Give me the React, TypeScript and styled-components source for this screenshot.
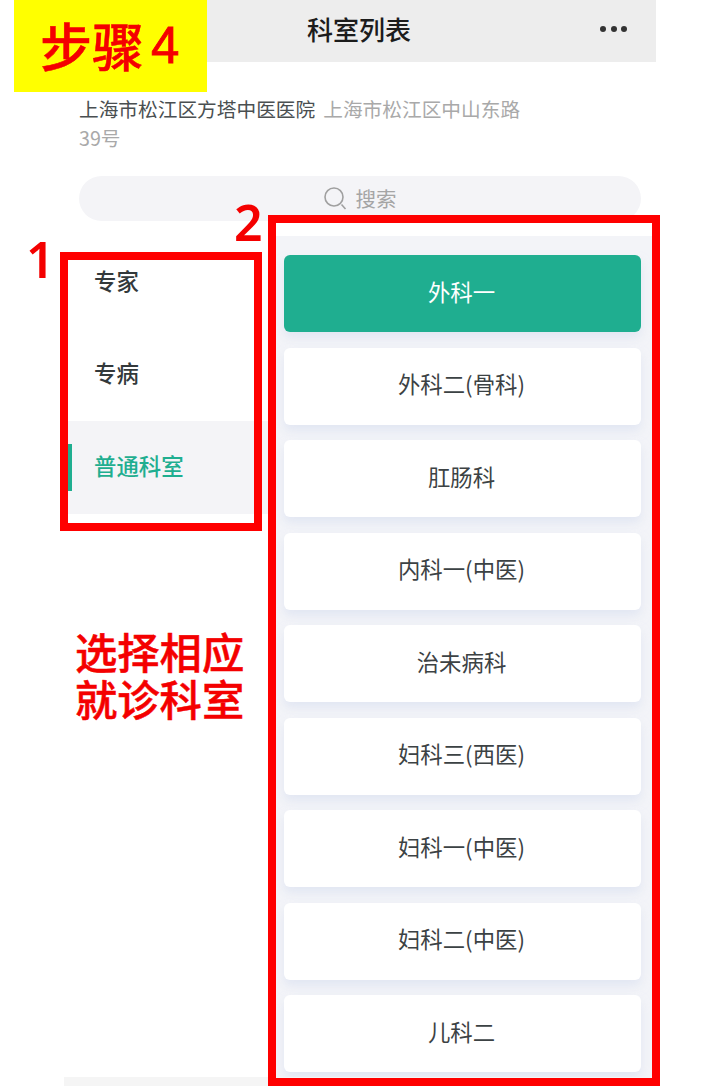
import React from "react";
import styled, { createGlobalStyle } from "styled-components";

const Global = createGlobalStyle`
  html, body { margin: 0; padding: 0; background: #fff; }
  body { font-family: "Noto Sans CJK SC", "Noto Sans", sans-serif; }
`;

const Page = styled.div`
  position: relative;
  width: 720px;
  height: 1086px;
  overflow: hidden;
  background: #fff;
`;
const Phone = styled.div`
  margin-left: 64px;
  width: 592px;
  display: flex;
  flex-direction: column;
`;
const Header = styled.header`
  height: 62px;
  background: #ededed;
  display: grid;
  grid-template-columns: 1fr auto 1fr;
  align-items: center;
`;
const Title = styled.h1`
  grid-column: 2;
  margin: 0;
  padding-right: 2px;
  padding-bottom: 5px;
  font-size: 26px;
  font-weight: 500;
  color: #1c1c1c;
  line-height: 1;
`;
const More = styled.div`
  justify-self: end;
  margin-right: 29px;
  padding-bottom: 5px;
  display: flex;
  gap: 4.5px;
`;
const Dot = styled.span`
  width: 6px;
  height: 6px;
  border-radius: 50%;
  background: #333;
`;
const Info = styled.div`
  padding: 32px 128px 2px 15px;
  font-size: 19.7px;
  line-height: 29px;
`;
const Hospital = styled.span`
  color: #4a4f51;
  margin-right: 8px;
`;
const Address = styled.span`
  color: #a9a9a9;
`;
const Search = styled.div`
  margin: 22px 15px 15px;
  height: 45px;
  border-radius: 23px;
  background: #f4f4f7;
  display: flex;
  align-items: center;
  justify-content: center;
  gap: 8px;
  font-size: 20.5px;
  color: #a5a5a5;
`;
const SearchText = styled.span`
  padding-bottom: 2px;
`;
const Body = styled.div`
  display: flex;
  height: 841px;
`;
const Side = styled.nav`
  width: 206px;
  flex: none;
`;
const SideItem = styled.div<{ $active?: boolean }>`
  position: relative;
  box-sizing: border-box;
  height: 92.5px;
  padding: 0 0 5px 30px;
  display: flex;
  align-items: center;
  font-size: 22.4px;
  font-weight: 500;
  color: ${(p) => (p.$active ? "#1fae90" : "#33393b")};
  background: ${(p) => (p.$active ? "#f4f4f7" : "transparent")};
  &::before {
    content: "";
    display: ${(p) => (p.$active ? "block" : "none")};
    position: absolute;
    left: 0;
    top: 23px;
    width: 8px;
    height: 47px;
    background: #1fae90;
  }
`;
const Panel = styled.section`
  flex: 1;
  background: #f3f4f8;
  padding: 19px 15px 0 14px;
  display: flex;
  flex-direction: column;
  gap: 15.5px;
  overflow: hidden;
`;
const Card = styled.div<{ $active?: boolean }>`
  flex: none;
  box-sizing: border-box;
  height: 77px;
  padding: 0 2px 6px 0;
  border-radius: 6px;
  display: flex;
  align-items: center;
  justify-content: center;
  font-size: 22.4px;
  color: ${(p) => (p.$active ? "#ffffff" : "#3c4244")};
  background: ${(p) => (p.$active ? "#1fae90" : "#ffffff")};
  box-shadow: 0 6px 10px rgba(214, 220, 238, 0.55);
`;
const Footer = styled.div`
  height: 9px;
  background: #f5f5f5;
`;
const StepBadge = styled.div`
  position: absolute;
  left: 14px;
  top: 0;
  width: 193px;
  height: 92px;
  box-sizing: border-box;
  padding: 0 0 2px 26px;
  background: #ffff00;
  color: #f40000;
  display: flex;
  align-items: center;
  gap: 7px;
  font-size: 52px;
  font-weight: 500;
  line-height: 1;
  -webkit-text-stroke: 0.5px #f40000;
`;
const StepDigit = styled.span`
  font-family: "Liberation Sans", sans-serif;
  font-weight: 400;
  font-size: 51px;
  -webkit-text-stroke: 0.8px #f40000;
`;
const Frame = styled.div<{ $x: number; $y: number; $w: number; $h: number }>`
  position: absolute;
  left: ${(p) => p.$x}px;
  top: ${(p) => p.$y}px;
  width: ${(p) => p.$w}px;
  height: ${(p) => p.$h}px;
  box-sizing: border-box;
  border: 8px solid #ff0000;
`;
const Num = styled.div<{ $x: number; $y: number }>`
  position: absolute;
  left: ${(p) => p.$x}px;
  top: ${(p) => p.$y}px;
  font-family: "Noto Sans", sans-serif;
  font-weight: 600;
  font-size: 50px;
  line-height: 1;
  color: #f40000;
`;
const Note = styled.div`
  position: absolute;
  left: 75px;
  top: 627px;
  font-size: 42.3px;
  font-weight: 500;
  line-height: 47px;
  color: #f40000;
  -webkit-text-stroke: 0.5px #f40000;
`;

const departments = [
  "外科一",
  "外科二(骨科)",
  "肛肠科",
  "内科一(中医)",
  "治未病科",
  "妇科三(西医)",
  "妇科一(中医)",
  "妇科二(中医)",
  "儿科二",
];

const SearchIcon = () => (
  <svg width="24" height="25" viewBox="0 0 24 25" fill="none" stroke="#a0a0a0" strokeWidth="1.6">
    <circle cx="10" cy="11" r="9" />
    <path d="M17.5 18.5l4 4.5" />
  </svg>
);

export default function App() {
  return (
    <Page>
      <Global />
      <Phone>
        <Header>
          <Title>科室列表</Title>
          <More>
            <Dot />
            <Dot />
            <Dot />
          </More>
        </Header>
        <Info>
          <Hospital>上海市松江区方塔中医医院</Hospital>
          <Address>上海市松江区中山东路39号</Address>
        </Info>
        <Search>
          <SearchIcon />
          <SearchText>搜索</SearchText>
        </Search>
        <Body>
          <Side>
            <SideItem>专家</SideItem>
            <SideItem>专病</SideItem>
            <SideItem $active>普通科室</SideItem>
          </Side>
          <Panel>
            {departments.map((d, i) => (
              <Card key={d} $active={i === 0}>
                {d}
              </Card>
            ))}
          </Panel>
        </Body>
        <Footer />
      </Phone>
      <StepBadge>
        <span>步骤</span>
        <StepDigit>4</StepDigit>
      </StepBadge>
      <Frame $x={60} $y={252} $w={202} $h={279} />
      <Frame $x={268} $y={215} $w={392} $h={871} />
      <Num $x={26} $y={234}>1</Num>
      <Num $x={234} $y={197}>2</Num>
      <Note>
        选择相应
        <br />
        就诊科室
      </Note>
    </Page>
  );
}
